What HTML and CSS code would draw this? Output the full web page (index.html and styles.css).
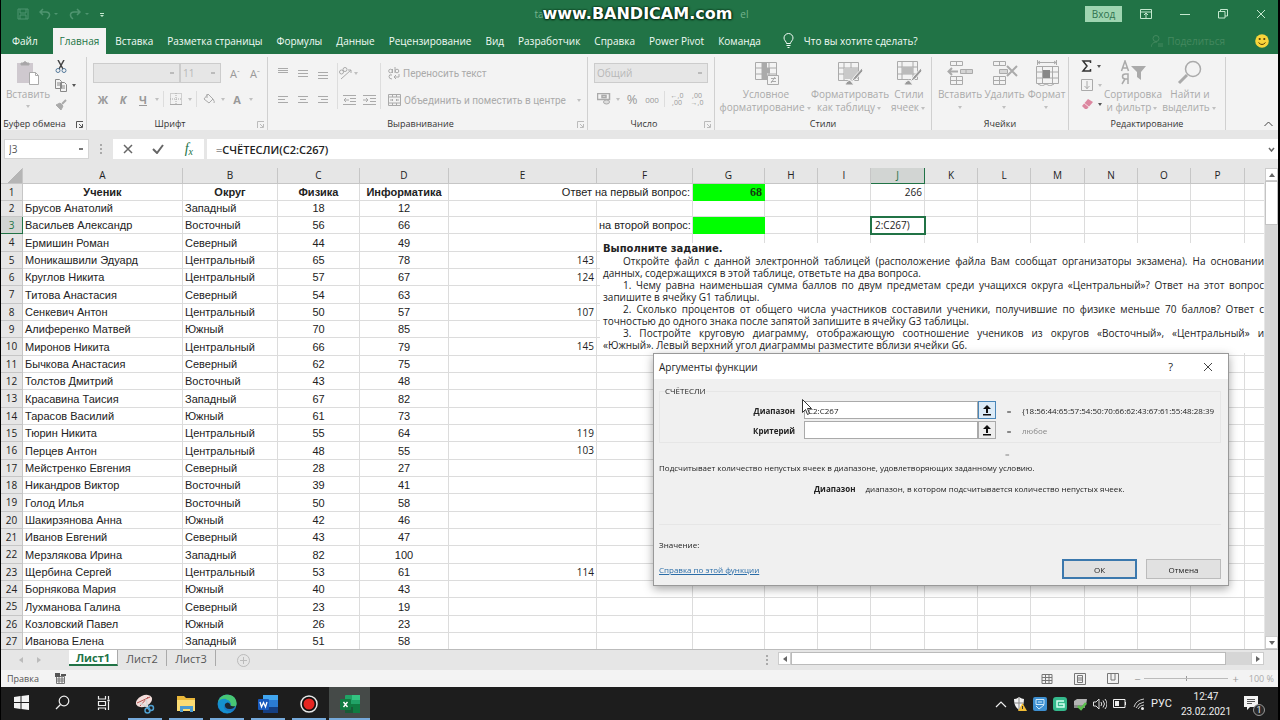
FILE: index.html
```html
<!DOCTYPE html>
<html lang="ru">
<head>
<meta charset="utf-8">
<title>Excel</title>
<link rel="stylesheet" href="styles.css">
</head>
<body>
<div class="app">
  <header class="titlebar">
    <div class="quick">
      <button aria-label="Сохранить"><svg width="12" height="12" viewBox="0 0 12 12"><path d="M1 1h10v10H1zM3 1v4h6V1M3 11V7h6v4"/></svg></button>
      <button aria-label="Отменить"><svg width="20" height="12" viewBox="0 0 20 12"><path d="M4 1L1 4l3 3M1 4h6c4 0 5 4 1 7" stroke-width="1.500"/><path d="M15 5h4l-2 2z" fill="currentColor" stroke="none"/></svg></button>
      <button aria-label="Вернуть"><svg width="20" height="12" viewBox="0 0 20 12"><path d="M8 1l3 3-3 3M11 4H5c-4 0-5 4-1 7" stroke-width="1.500"/><path d="M16 5h4l-2 2z" fill="currentColor" stroke="none"/></svg></button>
      <button class="lit" aria-label="Настройка панели"><svg width="6" height="12" viewBox="0 0 6 12"><path d="M1 5.500h4"/><path d="M1 7h4L3 9z" fill="currentColor" stroke="none"/></svg></button>
    </div>
    <div class="doc"><span>ta</span><span>el</span><div class="mark">www.BANDICAM.com</div></div>
    <div class="winbtns">
      <button class="login">Вход</button>
      <button aria-label="Параметры ленты"><svg width="12" height="10" viewBox="0 0 12 10"><path d="M.5.5h11v9H.5zM.5 3h11M6 9V4M4 6l2-2 2 2"/></svg></button>
      <button aria-label="Свернуть"><svg width="10" height="10" viewBox="0 0 10 10"><path d="M0 5.500h10"/></svg></button>
      <button aria-label="Развернуть"><svg width="10" height="10" viewBox="0 0 10 10"><path d="M.5 2.500h6.500v6.500H.5zM2.500 2.500v-2h7v6.500h-2.500"/></svg></button>
      <button aria-label="Закрыть"><svg width="10" height="10" viewBox="0 0 10 10"><path d="M1 1l8 8M9 1L1 9"/></svg></button>
    </div>
  </header>
  <nav class="tabs">
    <button>Файл</button><button class="on">Главная</button><button>Вставка</button><button>Разметка страницы</button><button>Формулы</button><button>Данные</button><button>Рецензирование</button><button>Вид</button><button>Разработчик</button><button>Справка</button><button>Power Pivot</button><button>Команда</button>
    <button class="tell"><svg width="11" height="15" viewBox="0 0 11 15"><path d="M3.500 10.500c0-2-2.500-3-2.500-5.500a4.500 4.500 0 0 1 9 0c0 2.500-2.500 3.500-2.500 5.500zM3.500 12.500h4M4.500 14.500h2"/></svg>Что вы хотите сделать?</button>
    <button class="share"><svg width="12" height="12" viewBox="0 0 12 12"><circle cx="5" cy="3.500" r="3"/><path d="M0 12c1-4 3-5 6-5M7 9h5M7 11h5"/></svg>Поделиться</button>
    <svg class="smile" width="14" height="14" viewBox="0 0 14 14"><circle cx="7" cy="7" r="6.800" fill="#f8d53a"/><circle cx="4.700" cy="5" r="1.100" fill="#553c08"/><circle cx="9.300" cy="5" r="1.100" fill="#553c08"/><path d="M3.500 8.500q3.500 4 7 0" fill="none" stroke="#553c08"/></svg>
  </nav>

  <section class="ribbon">
    <div class="group g-clip">
      <div class="body">
        <button class="big paste"><svg width="24" height="26" viewBox="0 0 24 26"><path d="M1 3h16v20H1z" fill="#cfc9cf" stroke="none"/><path d="M5 5V3h2q2-3 4 0h2v2z" fill="#a8a4a8"/><path d="M13.500 12.500h6l3 3v9h-9z" fill="#fff"/><path d="M19.500 12.500v3h3"/></svg>Вставить<i class="car"></i></button>
        <div class="stack">
          <button class="dark" aria-label="Вырезать"><svg width="12" height="13" viewBox="0 0 12 13"><path d="M3 0l5 9M9 0L4 9" stroke="#444" stroke-width="1.500"/><circle cx="3" cy="10.500" r="2" stroke="#54799b"/><circle cx="9" cy="10.500" r="2" stroke="#54799b"/></svg></button>
          <button class="dark" aria-label="Копировать"><svg width="12" height="13" viewBox="0 0 12 13"><path d="M.5.5h4l2 2v7h-6zM2 4h3M2 6h3M5.500 3.500h4l2 2v7h-6zM7 7h3M7 9h3" fill="#f3f3f3" stroke="#888"/></svg><i class="car"></i></button>
          <button aria-label="Формат по образцу"><svg width="12" height="11" viewBox="0 0 12 11"><path d="M1 6l4-2 3 3-2 4z" fill="#aaa"/><path d="M7 5l4-4" stroke-width="2"/></svg></button>
        </div>
      </div>
      <div class="cap">Буфер обмена<svg class="la" viewBox="0 0 7 7"><path d="M.5 7V.5H7M3 3l3 3M6.500 3v3.500H3"/></svg></div>
    </div>

    <div class="group g-font">
      <div class="body rows">
        <div class="line"><select class="sel font" aria-label="Шрифт"><option></option></select><select class="sel size" aria-label="Размер"><option>11</option></select><button class="w20">A<sup>ˆ</sup></button><button class="w20">A<sup>ˇ</sup></button></div>
        <div class="line"><button class="w20"><b>Ж</b></button><button class="w20"><b><em>К</em></b></button><button class="w20"><b><u>Ч</u></b></button><i class="car"></i><i class="sep"></i><button class="w20" aria-label="Границы"><svg width="12" height="12" viewBox="0 0 12 12"><path d="M.5.5h11v11H.5zM6 0v12M0 6h12" stroke-dasharray="1 1"/><path d="M0 11.500h12"/></svg></button><i class="car"></i><i class="sep"></i><button class="w20" aria-label="Заливка"><svg width="12" height="12" viewBox="0 0 12 12"><path d="M5 1l5 5-4 4-5-4zM4 5V1M10 6q2 3 1 4"/></svg></button><i class="car"></i><button class="w20"><b>A</b></button><i class="car"></i></div>
      </div>
      <div class="cap">Шрифт<svg class="la off" viewBox="0 0 7 7"><path d="M.5 7V.5H7M3 3l3 3M6.500 3v3.500H3"/></svg></div>
    </div>

    <div class="group g-align">
      <div class="body cols">
        <div class="al6">
          <button aria-label="По верху"><svg width="12" height="12" viewBox="0 0 12 12"><path d="M1 1.500h10M1 3.500h10M1 5.500h10"/></svg></button>
          <button aria-label="По середине"><svg width="12" height="12" viewBox="0 0 12 12"><path d="M1 3.500h10M1 6.500h10M1 9.500h10"/></svg></button>
          <button aria-label="По низу"><svg width="12" height="12" viewBox="0 0 12 12"><path d="M1 5.500h10M1 8.500h10M1 11.500h10"/></svg></button>
          <button aria-label="Слева"><svg width="12" height="12" viewBox="0 0 12 12"><path d="M1 2.500h10M1 5.500h7M1 8.500h10"/></svg></button>
          <button aria-label="По центру"><svg width="12" height="12" viewBox="0 0 12 12"><path d="M1 2.500h10M3 5.500h6M1 8.500h10"/></svg></button>
          <button aria-label="Справа"><svg width="12" height="12" viewBox="0 0 12 12"><path d="M1 2.500h10M4 5.500h7M1 8.500h10"/></svg></button>
        </div>
        <i class="sep tall"></i>
        <div class="al2">
          <button aria-label="Ориентация"><svg width="14" height="14" viewBox="0 0 14 14"><path d="M3 13L13 4M10 4h3v3"/><circle cx="3.500" cy="6" r="2"/><circle cx="7" cy="3.500" r="2"/></svg><i class="car"></i></button><span></span>
          <button aria-label="Уменьшить отступ"><svg width="13" height="12" viewBox="0 0 13 12"><path d="M0 1.500h13M7 4.500h6M7 7.500h6M0 10.500h13M6 6H1M3 4L1 6l2 2"/></svg></button>
          <button aria-label="Увеличить отступ"><svg width="13" height="12" viewBox="0 0 13 12"><path d="M0 1.500h13M7 4.500h6M7 7.500h6M0 10.500h13M0 6h5M3 4l2 2-2 2"/></svg></button>
        </div>
        <i class="sep tall"></i>
        <div class="wrapcol">
          <button><svg width="12" height="13" viewBox="0 0 12 13"><circle cx="2.500" cy="4" r="1.800"/><path d="M4.500 2v4M7 0v6M4 8q-3-1-3 1.500T4 12M11 7v3H6M8 8l-2 2 2 2"/><circle cx="9" cy="4" r="1.800"/></svg>Переносить текст</button>
          <button><svg width="13" height="12" viewBox="0 0 13 12"><path d="M.5.500h12v11H.5zM0 3h13M0 9h13M4.500 0v3M8.500 0v3M4.500 9v3M8.500 9v3M2 6h3M11 6H8M4 5l1 1-1 1M9 5L8 6l1 1"/></svg>Объединить и поместить в центре<i class="car"></i></button>
        </div>
      </div>
      <div class="cap">Выравнивание<svg class="la off" viewBox="0 0 7 7"><path d="M.5 7V.5H7M3 3l3 3M6.500 3v3.500H3"/></svg></div>
    </div>

    <div class="group g-num">
      <div class="body rows">
        <div class="line"><select class="sel num" aria-label="Формат числа"><option>Общий</option></select></div>
        <div class="line"><button class="w20" aria-label="Финансовый"><svg width="14" height="12" viewBox="0 0 14 12"><path d="M.5.500h12v6H.5zM5 2.500h4v2H5z" stroke-width="1.500"/><ellipse cx="9.500" cy="9" rx="3" ry="2" fill="#ddd"/></svg></button><i class="car"></i><button class="w20 pct">%</button><button class="w20 tiny">000</button><i class="sep"></i><button class="w20 dec">←,0<br>,00</button><button class="w20 dec">,00<br>→,0</button></div>
      </div>
      <div class="cap">Число<svg class="la off" viewBox="0 0 7 7"><path d="M.5 7V.5H7M3 3l3 3M6.500 3v3.500H3"/></svg></div>
    </div>

    <div class="group g-style">
      <div class="body bigs">
        <button class="big c1"><svg width="26" height="26" viewBox="0 0 26 26"><path d="M2.500 2.500h21v17h-21zM2 8h22M2 14h22M9 2v18M16 2v18"/><path d="M9 3h5v5h3v5h-3v6H9z" fill="#aaa" stroke="none"/><path d="M14.500 15.500h11v9h-11zM18 18.500h5M18 21.500h5M22 17l-4 6" fill="#f3f3f3"/></svg><span>Условное<br>форматирование<i class="car"></i></span></button>
        <button class="big c2"><svg width="26" height="26" viewBox="0 0 26 26"><path d="M1.500 2.500h20v18h-20zM1 8h21M1 14h21M7 2v19M14 2v19"/><path d="M7 8h14v11H7z" fill="#c9c9c9" stroke="none"/><path d="M25 8l-8 9-3 5 5-3 7-8zM8 25q1-4 5-5l4 5z" fill="#999" stroke="#f3f3f3"/></svg><span>Форматировать<br>как таблицу<i class="car"></i></span></button>
        <button class="big c3"><svg width="26" height="26" viewBox="0 0 26 26"><path d="M1.500 1.500h20v18h-20zM1 7h21M1 14h21M6 1v19M17 1v19"/><path d="M6 7h11v7H6z" fill="#bbb" stroke="none"/><path d="M25 8l-8 9-3 5 5-3 7-8zM8 25q1-4 5-5l4 5z" fill="#999" stroke="#f3f3f3"/></svg><span>Стили<br>ячеек<i class="car"></i></span></button>
      </div>
      <div class="cap">Стили</div>
    </div>

    <div class="group g-cells">
      <div class="body bigs">
        <button class="big d1"><svg width="26" height="26" viewBox="0 0 26 26"><path d="M3.500 1.500h12v4h-12zM9.500 1v5M3.500 16.500h12v8h-12zM3 20.500h13M9.500 16v9"/><path d="M13.500 9.500h12v4h-12zM19 9v5" fill="#d5d5d5"/><path d="M11 11.500H2M5 8l-3.500 3.500L5 15" stroke-width="2"/></svg><span>Вставить<i class="car"></i></span></button>
        <button class="big d2"><svg width="26" height="26" viewBox="0 0 26 26"><path d="M1.500 1.500h12v4h-12zM7.500 1v5M1.500 16.500h12v8h-12zM1 20.500h13M7.500 16v9"/><path d="M7.500 9.500h8v4h-8z" fill="#d5d5d5"/><path d="M15 6l10 10M25 6L15 16" stroke-width="2"/></svg><span>Удалить<i class="car"></i></span></button>
        <button class="big d3"><svg width="26" height="26" viewBox="0 0 26 26"><path d="M3.500 0v5M22.500 0v5M4 2.500h18M6 1L4 2.500 6 4M20 1l2 1.500L20 4M2.500 6.500h22v17h-22zM2 12h23M2 18h23M8.500 6v18M18.500 6v18M4 24l4 2 4-2 4 2 4-2"/><path d="M9 10h7v8H9z" fill="#888" stroke="none"/></svg><span>Формат<i class="car"></i></span></button>
      </div>
      <div class="cap">Ячейки</div>
    </div>

    <div class="group g-edit">
      <div class="body bigs">
        <div class="stack">
          <button class="dark" aria-label="Сумма"><svg width="11" height="12" viewBox="0 0 11 12"><path d="M9.500 3V1H2l4 5-4 5h7.500V9" stroke="#333" stroke-width="1.500"/></svg><i class="car"></i></button>
          <button aria-label="Заполнить"><svg width="12" height="12" viewBox="0 0 12 12"><path d="M.5.500h11v11H.5zM6 2v8M3.500 7L6 9.500 8.500 7"/></svg><i class="car"></i></button>
          <button class="dark" aria-label="Очистить"><svg width="12" height="12" viewBox="0 0 12 12"><path d="M1 8l6-7 5 3-6 7H4z" fill="#dc87a0" stroke="none"/><path d="M3 5l5 4" stroke="#f7dce4"/></svg><i class="car"></i></button>
        </div>
        <button class="big e1"><svg width="26" height="26" viewBox="0 0 26 26"><path d="M11 6h15l-5 6v8l-4-3v-5z" fill="#aaa" stroke="none"/><path d="M1.500 11l3.500-10 3.500 10M3 8h4M8 24v-10H5.500q-3 0-3 2.500T5.500 19H8M5 19l-3 5" stroke-width="1.500"/></svg><span>Сортировка<br>и фильтр<i class="car"></i></span></button>
        <button class="big e2"><svg width="26" height="26" viewBox="0 0 26 26"><circle cx="16" cy="9" r="7.500" stroke-width="1.500"/><path d="M10 15l-8 8" stroke-width="3"/></svg><span>Найти и<br>выделить<i class="car"></i></span></button>
      </div>
      <div class="cap">Редактирование</div>
    </div>
    <button class="fold" aria-label="Свернуть ленту"><svg width="9" height="6" viewBox="0 0 9 6"><path d="M.5 5l4-4 4 4" stroke="#444"/></svg></button>
  </section>

  <section class="fbar">
    <select class="name" aria-label="Имя ячейки"><option>J3</option></select>
    <i class="grip"></i>
    <div class="fbtns">
      <button aria-label="Отмена"><svg width="10" height="10" viewBox="0 0 10 10"><path d="M1 1l8 8M9 1L1 9" stroke="#666" stroke-width="1.500"/></svg></button>
      <button aria-label="Ввод"><svg width="12" height="10" viewBox="0 0 12 10"><path d="M1 5l4 4 6-8" stroke="#666" stroke-width="2"/></svg></button>
      <button class="fx">f<small>x</small></button>
    </div>
    <div class="fin"><span><i>=</i>СЧЁТЕСЛИ(C2:C267)</span><svg width="7" height="5" viewBox="0 0 7 5"><path d="M1 1l2.500 3L6 1" stroke="#666" stroke-width="1.500" fill="none"/></svg></div>
  </section>

  <main class="sheet">
    <div class="grid">
      <table class="cells">
        <colgroup><col class="k0"><col class="kA"><col class="kB"><col class="kC"><col class="kD"><col class="kE"><col class="kF"><col class="kG"><col class="kn"><col class="kn"><col class="kw"><col class="kn"><col class="kn"><col class="kw"><col class="kn"><col class="kn"><col class="kw"><col class="kn"></colgroup>
        <thead><tr><th class="corner"></th><th>A</th><th>B</th><th>C</th><th>D</th><th>E</th><th>F</th><th>G</th><th>H</th><th>I</th><th class="cur">J</th><th>K</th><th>L</th><th>M</th><th>N</th><th>O</th><th>P</th><th></th></tr></thead>
        <tbody id="rows"></tbody>
      </table>
      <div class="task">
        <b>Выполните задание.</b>
        <p class="j ind">Откройте файл с данной электронной таблицей (расположение файла Вам сообщат организаторы экзамена). На основании</p>
        <p>данных, содержащихся в этой таблице, ответьте на два вопроса.</p>
        <p class="j ind">1. Чему равна наименьшая сумма баллов по двум предметам среди учащихся округа «Центральный»? Ответ на этот вопрос</p>
        <p>запишите в ячейку G1 таблицы.</p>
        <p class="j ind">2. Сколько процентов от общего числа участников составили ученики, получившие по физике меньше 70 баллов? Ответ с</p>
        <p>точностью до одного знака после запятой запишите в ячейку G3 таблицы.</p>
        <p class="j ind">3. Постройте круговую диаграмму, отображающую соотношение учеников из округов «Восточный», «Центральный» и</p>
        <p>«Южный». Левый верхний угол диаграммы разместите вблизи ячейки G6.</p>
      </div>
    </div>
    <div class="vbar"><button aria-label="Вверх"><i class="tri up"></i></button><div class="vthumb"></div><div class="vtrack"></div><button aria-label="Вниз"><i class="tri down"></i></button></div>
  </main>

  <div class="sheets">
    <div class="arrows"><i class="tri left"></i><i class="tri right"></i></div>
    <button class="on">Лист1</button><button>Лист2</button><button>Лист3</button>
    <button class="add" aria-label="Новый лист"><svg width="13" height="13" viewBox="0 0 13 13"><circle cx="6.500" cy="6.500" r="6"/><path d="M6.500 3v7M3 6.500h7"/></svg></button>
    <div class="hbar"><i class="grip"></i><button aria-label="Влево"><i class="tri left"></i></button><div class="hthumb"></div><div class="htrack"></div><button aria-label="Вправо"><i class="tri right"></i></button></div>
  </div>

  <div class="status">
    <span>Правка</span>
    <svg width="11" height="11" viewBox="0 0 11 11"><path d="M1.500 3.500h8v7h-8zM4 3v8M7 3v8M1 6h9M1 8h9"/><path d="M0 0h5v4H0zM6 1h5v2H6z" fill="#555" stroke="none"/></svg>
    <div class="views">
      <svg width="12" height="12" viewBox="0 0 12 12"><path d="M1 1.500h10v9H1zM4.500 1v10M8 1v10M1 4.500h10M1 7.500h10"/></svg>
      <svg width="12" height="12" viewBox="0 0 12 12"><path d="M.5.500h11v11H.5zM3.500 2.500h5v7h-5zM4 5h4M4 7h4"/></svg>
      <svg width="12" height="12" viewBox="0 0 12 12"><path d="M.5.500h11v10H.5zM4 1v6h4V1"/></svg>
    </div>
    <div class="zoom"><span>−</span><i class="rail"></i><span>+</span></div>
    <span class="pc">100 %</span>
  </div>

  <footer class="taskbar">
    <button aria-label="Пуск"><svg width="15" height="15" viewBox="0 0 15 15"><path d="M0 2l6.500-1v6H0zM7.500 1L15 0v7H7.500zM0 8h6.500v6L0 13zM7.500 8H15v7l-7.500-1z" fill="#f2f2f2"/></svg></button>
    <button aria-label="Поиск"><svg width="15" height="15" viewBox="0 0 15 15"><circle cx="9" cy="6" r="4.800" fill="none" stroke="#eee" stroke-width="1.200"/><path d="M5.500 9.500L1 14" stroke="#eee" stroke-width="1.200"/></svg></button>
    <button aria-label="Представление задач"><svg width="14" height="14" viewBox="0 0 14 14"><path d="M1.500 0v3h7V0M1.500 5.500h7v4h-7zM1.500 14v-2h7v2M11.500 0v3M11.500 6v8" fill="none" stroke="#eee" stroke-width="1.200"/><circle cx="11.500" cy="4.500" r="1.200" fill="#eee"/></svg></button>
    <button class="run" aria-label="Ножницы"><svg width="20" height="20" viewBox="0 0 20 20"><ellipse cx="9" cy="7" rx="8.500" ry="5.500" fill="#f3dedb" transform="rotate(-25 9 7)"/><path d="M2 9l13-6M5 12l8-9" stroke="#b85450"/><path d="M5 9l9 5M11 5l2 10" stroke="#d8d8d8" stroke-width="1.500"/><circle cx="16" cy="14" r="2.500" fill="none" stroke="#4f9fcf" stroke-width="1.500"/><circle cx="12.500" cy="16.500" r="2.500" fill="none" stroke="#4f9fcf" stroke-width="1.500"/></svg></button>
    <button class="run" aria-label="Проводник"><svg width="20" height="18" viewBox="0 0 20 18"><path d="M1 1h7l2 2h9v13H1z" fill="#e9b73a"/><path d="M1 5h18v11H1z" fill="#fbdc74"/><path d="M4 17v-6h13v6h-3v-3H7v3z" fill="#4b9bd0"/></svg></button>
    <button class="run" aria-label="Edge"><svg width="20" height="20" viewBox="0 0 20 20"><circle cx="10" cy="10" r="9.500" fill="#1a79c4"/><path d="M1 8C3 1 9 0 13 1c5 1 8 7 6 11q-2 2-6 1c2-3 0-7-4-7-3 0-6 1-8 2z" fill="#48c774"/><path d="M1 8c4-6 12-3 12 2-3-3-7 0-6 4 1 3 5 4 9 3-6 5-16 1-15-9z" fill="#1591cf"/><path d="M8 10q3-3 5 0 0 3 5 2-1 3-5 3-6 0-5-5z" fill="#1d2732"/></svg></button>
    <button class="run" aria-label="Word"><svg width="20" height="18" viewBox="0 0 20 18"><rect x="5" y="0" width="15" height="18" rx="1" fill="#2b7cd3"/><path d="M5 0h15v5H5z" fill="#41a5ee"/><path d="M5 12h15v6H5z" fill="#153f82"/><rect y="4" width="11" height="11" rx="1" fill="#185abd"/><path d="M2 7l1.500 5L5.500 7.500 7.500 12 9 7" fill="none" stroke="#fff" stroke-width="1.300"/></svg></button>
    <button class="run" aria-label="Запись"><svg width="18" height="18" viewBox="0 0 18 18"><circle cx="9" cy="9" r="8" fill="#111" stroke="#e8e8e8" stroke-width="1.500"/><circle cx="9" cy="9" r="5.500" fill="#e52521"/></svg></button>
    <button class="run act" aria-label="Excel"><svg width="20" height="18" viewBox="0 0 20 18"><rect x="5" y="0" width="15" height="18" rx="1" fill="#21a366"/><path d="M12 0h8v5h-8z" fill="#33c481"/><path d="M5 9h15v9H5z" fill="#107c41"/><path d="M5 12h8v6H5z" fill="#185c37"/><rect y="4" width="11" height="11" rx="1" fill="#107c41"/><path d="M3.500 7l4 5M7.500 7l-4 5" stroke="#fff" stroke-width="1.400"/></svg></button>
    <div class="tray">
      <svg width="12" height="8" viewBox="0 0 12 8"><path d="M1 7l5-5 5 5" fill="none" stroke="#eee" stroke-width="1.200"/></svg>
      <svg width="14" height="14" viewBox="0 0 14 14"><path d="M1 2q3 0 5-2 3 2 5 2 0 8-5 11Q1 10 1 2z" fill="#f2f2f2"/><path d="M6 0v12M1 6h10" stroke="#888"/><path d="M9.500 6l4.500 8H5z" fill="#f2bc34"/><path d="M9.500 9v3" stroke="#333"/></svg>
      <svg width="14" height="14" viewBox="0 0 14 14"><rect width="14" height="14" rx="2" fill="#3d8fd1"/><path d="M3 2.500h8v5H3zM3 9l3 3 5-4M5 5h4" fill="none" stroke="#cfe9fb"/></svg>
      <svg width="14" height="14" viewBox="0 0 14 14"><rect width="14" height="14" rx="3" fill="#34b98c"/><path d="M11 4H4v6h7V7H6" fill="none" stroke="#d5fff0" stroke-width="1.500"/></svg>
      <svg width="14" height="14" viewBox="0 0 14 14"><path d="M1 4l3-2h10l-1 6H1z" fill="#b4b4b4"/><path d="M1 8h11v3H1z" fill="#8b8b8b"/><path d="M5 9l3 3 5-6" fill="none" stroke="#5bbf4d" stroke-width="2.500"/></svg>
      <svg width="14" height="12" viewBox="0 0 14 12"><path d="M.5 4h2.500L6 1v10L3 8H.5zM8 4q1.500 2 0 4M10 2.500q3 3.500 0 7M12 1q4 5 0 10" fill="none" stroke="#ddd"/></svg>
      <svg width="14" height="9" viewBox="0 0 14 9"><path d="M.5.500h11.500v8H.5zM12.500 3v3" fill="none" stroke="#eee"/><path d="M2 2h4v5H2z" fill="#eee"/></svg>
      <svg width="12" height="12" viewBox="0 0 12 12"><path d="M1 9Q3 2 11 1M3 10q2-5 8-6M5 11q2-4 6-4" fill="none" stroke="#ccc"/><circle cx="9.500" cy="10.500" r="1.500" fill="#eee"/></svg>
      <span>РУС</span>
      <div class="clock"><time>12:47</time><time>23.02.2021</time></div>
      <div class="note"><svg width="14" height="14" viewBox="0 0 14 14"><path d="M0 0h14v11H6l-3 3v-3H0z" fill="#f4f4f4"/><path d="M3 3.500h8M3 5.500h8M3 7.500h5" stroke="#555"/></svg><span class="badge">1</span></div>
    </div>
  </footer>
</div>

<div class="dialog" role="dialog" aria-labelledby="dt">
  <div class="dhead"><span id="dt">Аргументы функции</span><button>?</button><button aria-label="Закрыть"><svg width="10" height="10" viewBox="0 0 10 10"><path d="M1 1l8 8M9 1L1 9" stroke="#444"/></svg></button></div>
  <div class="dbody">
    <fieldset>
      <legend>СЧЁТЕСЛИ</legend>
      <div class="arg"><label for="a1">Диапазон</label><input id="a1" value="C2:C267"><button class="focus" aria-label="Выбрать диапазон"><svg width="10" height="11" viewBox="0 0 10 11"><path d="M5 0l4 4H6v4H4V4H1zM1 9h8v1.500H1z" fill="#111"/></svg></button><span>=</span><output>{18:56:44:65:57:54:50:70:66:62:43:67:61:55:48:28:39</output></div>
      <div class="arg"><label for="a2">Критерий</label><input id="a2"><button aria-label="Выбрать критерий"><svg width="10" height="11" viewBox="0 0 10 11"><path d="M5 0l4 4H6v4H4V4H1zM1 9h8v1.500H1z" fill="#111"/></svg></button><span>=</span><output class="any">любое</output></div>
    </fieldset>
    <div class="res">=</div>
    <p class="desc">Подсчитывает количество непустых ячеек в диапазоне, удовлетворяющих заданному условию.</p>
    <div class="hint"><b>Диапазон</b><span>диапазон, в котором подсчитывается количество непустых ячеек.</span></div>
    <div class="val">Значение:</div>
    <div class="foot"><a href="#">Справка по этой функции</a><button class="ok">ОК</button><button>Отмена</button></div>
  </div>
  <svg class="pointer" width="10" height="16" viewBox="0 0 10 16"><path d="M.5.500v13l3-3 2 5 2-1-2-5h4z" fill="#fff" stroke="#333"/></svg>
</div>
<script src="app.js"></script>
</body>
</html>
```
FILE: app.js
```js
const data = [
  ['Брусов Анатолий', 'Западный', 18, 12],
  ['Васильев Александр', 'Восточный', 56, 66],
  ['Ермишин Роман', 'Северный', 44, 49],
  ['Моникашвили Эдуард', 'Центральный', 65, 78, 143],
  ['Круглов Никита', 'Центральный', 57, 67, 124],
  ['Титова Анастасия', 'Северный', 54, 63],
  ['Сенкевич Антон', 'Центральный', 50, 57, 107],
  ['Алиференко Матвей', 'Южный', 70, 85],
  ['Миронов Никита', 'Центральный', 66, 79, 145],
  ['Бычкова Анастасия', 'Северный', 62, 75],
  ['Толстов Дмитрий', 'Восточный', 43, 48],
  ['Красавина Таисия', 'Западный', 67, 82],
  ['Тарасов Василий', 'Южный', 61, 73],
  ['Тюрин Никита', 'Центральный', 55, 64, 119],
  ['Перцев Антон', 'Центральный', 48, 55, 103],
  ['Мейстренко Евгения', 'Северный', 28, 27],
  ['Никандров Виктор', 'Восточный', 39, 41],
  ['Голод Илья', 'Восточный', 50, 58],
  ['Шакирзянова Анна', 'Южный', 42, 46],
  ['Иванов Евгений', 'Северный', 43, 47],
  ['Мерзлякова Ирина', 'Западный', 82, 100],
  ['Щербина Сергей', 'Центральный', 53, 61, 114],
  ['Борнякова Мария', 'Южный', 40, 43],
  ['Лухманова Галина', 'Северный', 23, 19],
  ['Козловский Павел', 'Южный', 26, 23],
  ['Иванова Елена', 'Западный', 51, 58]
];

const blank = n => '<td></td>'.repeat(n);
let html = '<tr><th>1</th><td class="h">Ученик</td><td class="h">Округ</td><td class="h">Физика</td>' +
  '<td class="h">Информатика</td><td class="q" colspan="2">Ответ на первый вопрос:</td><td class="green">68</td>' +
  blank(2) + '<td class="n">266</td>' + blank(7) + '</tr>';

data.forEach((r, i) => {
  const row = i + 2;
  const tail = row === 3
    ? '<td class="q">на второй вопрос:</td><td class="green"></td>' + blank(2) + '<td class="edit">2:C267)</td>' + blank(7)
    : blank(12);
  html += `<tr><th${row === 3 ? ' class="cur"' : ''}>${row}</th><td>${r[0]}</td><td>${r[1]}</td>` +
    `<td class="c">${r[2]}</td><td class="c">${r[3]}</td><td class="n">${r[4] || ''}</td>${tail}</tr>`;
});
document.getElementById('rows').innerHTML = html;
```
FILE: styles.css
```css
* { box-sizing: border-box; }
body { margin: 0; background: #000; font-family: "Open Sans", "Noto Sans", sans-serif; font-size: 10px; color: #333; overflow: hidden; }
button { font: inherit; color: inherit; background: none; border: 0; padding: 0; margin: 0; display: flex; align-items: center; justify-content: center; white-space: nowrap; }
select, input { font: inherit; color: inherit; }
svg { flex: none; display: block; }
p { margin: 0; }
.app { height: 100vh; min-height: 560px; display: flex; flex-direction: column; margin: 0 2px 0 1px; background: #e6e6e6; }

.titlebar { flex: none; height: 27px; background: #217346; color: #c5e8cf; display: grid; grid-template-columns: 1fr auto 1fr; align-items: center; padding: 0 12px 0 16px; }
.titlebar svg, .tabs svg { fill: none; stroke: currentColor; }
.quick { display: flex; align-items: center; gap: 10px; color: #4f9570; }
.quick .lit { color: #c5e8cf; }
.doc { position: relative; width: 214px; display: flex; justify-content: space-between; color: #75b38e; }
.mark { position: absolute; left: 8px; top: -3px; font: bold 16px/20px "DejaVu Sans", sans-serif; color: #fff; text-shadow: 0 1px 2px #062b14, 1px 0 2px #062b14, -1px 0 2px #062b14; }
.winbtns { display: flex; align-items: center; justify-content: flex-end; gap: 28px; }
.login { background: #9fd5b1; color: #2f7350; width: 37px; height: 16px; margin-right: -10px; }

.tabs { flex: none; height: 27px; background: #217346; color: #f2fbf5; display: flex; align-items: stretch; padding: 0 5px 0 4px; }
.tabs button { padding: 0 7px; }
.tabs .on { background: #f3f3f3; color: #217346; margin: 1px 2px 0 8px; }
.tabs .tell { gap: 10px; margin-left: 8px; }
.tabs .share { margin-left: auto; gap: 4px; color: #44895f; padding: 0; }
.tabs .smile { stroke: none; align-self: center; margin: 0 4px 0 30px; }

.ribbon { flex: none; height: 76px; background: #f3f3f3; display: flex; color: #aaa; position: relative; overflow: hidden; }
.ribbon svg { fill: none; stroke: #aaa; }
.group { border-right: 1px solid #d0d0d0; margin: 3px 0 0; display: flex; flex-direction: column; min-width: 0; }
.body { flex: 1; display: flex; min-height: 0; }
.cap { height: 16px; line-height: 16px; text-align: center; color: #333; font-size: 9px; position: relative; margin-bottom: -2px; }
.la { position: absolute; right: 3px; top: 5px; width: 7px; height: 7px; }
.ribbon .la { stroke: #555; }
.ribbon .la.off { stroke: #bbb; }
.g-clip { flex: 0 0 86px; }
.g-clip .cap { padding-right: 18px; }
.g-font { flex: 0 0 181px; }
.g-align { flex: 0 0 320px; }
.g-align .cap { padding-right: 14px; }
.g-num { flex: 0 0 127px; }
.g-num .cap, .g-font .cap { padding-right: 14px; }
.g-style { flex: 0 0 217px; }
.g-cells { flex: 0 0 137px; }
.g-edit { flex: 0 0 157px; }
.car { display: inline-block; width: 0; height: 0; border: 2px solid transparent; border-top: 3px solid #c0c0c0; border-bottom: 0; margin: 0 2px; vertical-align: middle; flex: none; }
.dark .car { border-top-color: #555; }
.big { flex-direction: column; justify-content: flex-start; line-height: 13px; }
.big svg { margin: 3px 0 2px; }
.paste { width: 54px; }
.paste .car { margin-top: 4px; }
.stack { display: flex; flex-direction: column; gap: 5px; width: 22px; padding-top: 2px; }
.stack button { height: 14px; justify-content: flex-start; gap: 3px; }
.rows { flex-direction: column; gap: 6px; padding: 6px 0 0 6px; }
.line { display: flex; align-items: center; height: 20px; }
.line button { height: 20px; color: #999; font-size: 11px; }
.line sup { font-size: 8px; line-height: 8px; }
.w20 { width: 20px; flex: none; }
.sep { width: 1px; height: 16px; background: #ddd; margin: 0 2px; flex: none; }
.sep.tall { height: 46px; margin: 6px 0 0; }
.sel { appearance: none; height: 20px; border: 1px solid #ccc; border-radius: 0; color: #b8b8b8; padding: 0 2px; opacity: 1;
  background: #e6e6e6 linear-gradient(#bbb, #bbb) no-repeat right 5px center / 4px 2px; }
.font { width: 87px; }
.size { width: 41px; margin-right: 4px; }
.num { width: 114px; }
.line .pct { font-size: 13px; }
.line .tiny { font-size: 8px; }
.line .dec { font-size: 7px; line-height: 7px; }
.cols { padding-left: 5px; }
.al6 { flex: none; display: grid; grid-template-columns: repeat(3, 20px); grid-template-rows: 20px 20px; row-gap: 7px; padding-top: 6px; width: 64px; }
.al2 { flex: none; display: grid; grid-template-columns: 20px 20px; grid-template-rows: 20px 20px; row-gap: 7px; padding: 6px 1px 0; }
.wrapcol { display: flex; flex-direction: column; gap: 7px; padding: 6px 0 0 7px; align-items: flex-start; font-family: Roboto, sans-serif; }
.wrapcol button { height: 20px; gap: 3px; }
.wrapcol .car { margin-left: 8px; }
.bigs { justify-content: center; }
.g-style .bigs, .g-cells .bigs, .g-edit .bigs { padding-left: 4px; }
.c1 { width: 88px; }
.c2 { width: 80px; }
.c3 { width: 38px; }
.g-cells span { display: flex; flex-direction: column; align-items: center; gap: 5px; }
.d1 { width: 45px; }
.d2 { width: 44px; }
.d3 { width: 40px; }
.e1 { width: 60px; }
.e2 { width: 54px; }
.fold { position: absolute; right: 5px; bottom: 3px; }

.fbar { flex: none; display: flex; height: 20px; margin: 9px 0; padding-left: 3px; }
.name { appearance: none; width: 85px; border: 1px solid #d4d4d4; border-radius: 0; padding: 0 4px; color: #555; background: #fff linear-gradient(#777, #777) no-repeat right 5px center / 4px 2px; }
.grip { width: 2px; border-left: 2px dotted #aaa; height: 10px; margin: 5px 11px 0; }
.fbtns { width: 91px; background: #fff; display: flex; }
.fbtns button { flex: 1; }
.fbtns svg { fill: none; }
.fx { font: italic 14px "Liberation Serif", serif; color: #217346; }
.fx small { font-size: 10px; padding-top: 4px; }
.fin { flex: 1; margin-left: 3px; background: #fff; display: flex; align-items: center; justify-content: space-between; padding: 0 3px 0 9px; font-size: 11px; font-weight: 600; color: #222; }
.fin i { font-style: normal; color: #999; }

.sheet { flex: 1; min-height: 0; display: flex; }
.grid { flex: 1; min-width: 0; position: relative; overflow: hidden; background: #fff; }
.cells { table-layout: fixed; border-collapse: separate; border-spacing: 0; width: 1297px; font: 11px/16px "Liberation Sans", sans-serif; color: #222; }
.k0 { width: 22px; } .kA { width: 160px; } .kB { width: 95px; } .kC { width: 82px; } .kD { width: 89px; }
.kE { width: 148px; } .kF { width: 96px; } .kG { width: 72px; } .kn { width: 53px; } .kw { width: 54px; }
.cells td, .cells th { padding: 0 2px; border-right: 1px solid #dcdcdc; border-bottom: 1px solid #dcdcdc; white-space: nowrap; overflow: hidden; height: 17px; }
.cells th { font: 10px/15px "Open Sans", sans-serif; background: #e6e6e6; border-color: #c6c6c6; padding: 0; }
.cells thead th { height: 16px; }
.cells .corner { background: linear-gradient(135deg, #e6e6e6 60%, #b5b5b5 60%); }
.cells tbody tr:nth-child(3n+4) > * { height: 18px; }
.cells tbody tr:nth-child(2) > * { height: 16px; line-height: 15px; }
.cells .cur { background: #d2d5d3; color: #217346; border-color: #217346; }
.cells .h { font-weight: bold; text-align: center; }
.cells .c { text-align: center; }
.cells .n { text-align: right; font: 10px/15px "Open Sans", sans-serif; }
.cells .q { text-align: right; }
.cells .green { background: #0f0; border-color: #0f0; text-align: right; font: bold 12px/15px "Liberation Serif", serif; color: #143a10; }
.cells .edit { font: 10px/15px "Open Sans", sans-serif; outline: 2px solid #217346; outline-offset: -1px; border-color: transparent; padding-left: 4px; }
.task { position: absolute; left: 599px; right: 0; top: 75px; height: 110px; background: #fff; padding-left: 3px; font-size: 10px; line-height: 12px; color: #222; white-space: nowrap; }
.task b { display: block; font-family: "DejaVu Sans", sans-serif; }
.task .ind { padding-left: 20px; }
.task .j { text-align-last: justify; }
.vbar { flex: none; width: 13px; background: #d6d6d6; display: flex; flex-direction: column; margin-left: 1px; }
.vbar button { height: 13px; background: #fff; border: 1px solid #ccc; }
.vthumb { height: 44px; background: #fff; border: 1px solid #c4c4c4; }
.vtrack { flex: 1; }
.tri { width: 0; height: 0; border: 3px solid transparent; }
.up { border-bottom: 4px solid #666; border-top: 0; }
.down { border-top: 4px solid #666; border-bottom: 0; }
.left { border-right: 4px solid #666; border-left: 0; }
.right { border-left: 4px solid #666; border-right: 0; }

.sheets { flex: none; height: 21px; border-top: 1px solid #bbb; display: flex; align-items: flex-start; font-size: 11px; color: #555; }
.arrows { width: 68px; display: flex; gap: 14px; padding: 7px 0 0 18px; }
.arrows .left { border-right-color: #bbb; }
.arrows .right { border-left-color: #bbb; }
.sheets > button { width: 49px; height: 16px; border-right: 1px solid #aaa; }
.sheets > .on { background: #fff; color: #217346; font-weight: bold; border-bottom: 2px solid #217346; }
.sheets > .add { border: 0; margin: 2px 0 0 3px; color: #bbb; }
.sheets svg { fill: none; stroke: #bbb; }
.hbar { margin-left: auto; flex: 0 0 512px; display: flex; padding: 2px 14px 0 0; }
.hbar .grip { margin: 3px 10px 0 0; }
.hbar button { width: 13px; height: 13px; background: #fff; border: 1px solid #ccc; flex: none; }
.hthumb { flex: 435; height: 13px; background: #fff; border: 1px solid #bbb; }
.htrack { flex: 25; height: 13px; background: #d6d6d6; }

.status { flex: none; height: 17px; background: #f3f3f3; display: flex; align-items: center; padding: 0 4px 0 6px; font-size: 9px; color: #555; }
.status svg { fill: none; stroke: #777; }
.status > svg { margin-left: 16px; }
.views { margin-left: auto; display: flex; gap: 21px; }
.zoom { display: flex; align-items: center; gap: 4px; margin-left: 15px; color: #999; font-size: 11px; }
.rail { width: 84px; height: 5px; background: linear-gradient(#bbb, #bbb) no-repeat center / 100% 1px, linear-gradient(#999, #999) no-repeat center / 1px 5px; }
.pc { margin-left: 10px; color: #aaa; }

.taskbar { flex: none; height: 33px; background: #1d1d1d; display: flex; color: #eee; }
.taskbar > button { width: 41px; border-bottom: 2px solid transparent; }
.taskbar > button.run { background: linear-gradient(#76aadb, #76aadb) no-repeat center bottom / 34px 2px; background-origin: border-box; border: 0; }
.taskbar > button.act { background-color: #454a48; background-size: 100% 2px; }
.tray { margin-left: auto; display: flex; align-items: center; gap: 6px; padding-right: 16px; font: 11px Roboto, sans-serif; }
.clock { display: flex; flex-direction: column; align-items: center; line-height: 15px; width: 56px; font-size: 10px; }
.note { position: relative; padding: 0 4px 2px 4px; }
.badge { position: absolute; right: -3px; bottom: -4px; width: 12px; height: 12px; border-radius: 50%; background: #2a2a2a; border: 1px solid #999; font-size: 9px; line-height: 10px; text-align: center; }

.dialog { position: fixed; right: 51px; top: 353px; width: 576px; height: 233px; background: #f0f0f0; border: 1px solid #999; box-shadow: 0 3px 9px rgba(0, 0, 0, .35); font-size: 8px; color: #222; display: flex; flex-direction: column; }
.dhead { height: 25px; background: #fff; display: flex; align-items: center; padding: 0 15px 0 5px; font-size: 10px; }
.dhead span { flex: 1; }
.dhead button { font-size: 11px; margin-left: 30px; }
.dbody { flex: 1; padding: 6px 7px 6px 5px; display: flex; flex-direction: column; }
fieldset { margin: 0; border: 1px solid #e6e6e6; padding: 4px 5px 2px 8px; height: 58px; min-width: 0; }
legend { padding: 0; line-height: 12px; margin-left: -3px; }
.arg { display: flex; height: 18px; margin-bottom: 2px; align-items: center; }
.arg label { width: 127px; text-align: right; font-weight: bold; margin-right: 9px; }
.arg input { width: 174px; height: 18px; border: 1px solid #aaa; padding: 0 3px; margin: 0; }
.arg button { width: 18px; height: 18px; border: 1px solid #aaa; background: #eee; }
.arg .focus { border-color: #4a86b8; background: #dcebf7; }
.arg span { width: 26px; text-align: center; }
.arg output { flex: 1; min-width: 0; white-space: nowrap; }
.any, .res { color: #888; }
.res { padding-left: 346px; line-height: 12px; margin-top: 5px; }
.desc { line-height: 12px; margin-top: 2px; }
.hint { display: flex; gap: 10px; padding-left: 155px; line-height: 12px; margin-top: 9px; height: 42px; border-bottom: 1px solid #e6e6e6; }
.val { line-height: 12px; margin-top: auto; }
.foot { display: flex; align-items: center; margin-top: 8px; gap: 9px; }
.foot a { color: #2b6da8; flex: 1; }
.foot button { width: 75px; height: 20px; background: #e1e1e1; border: 1px solid #bbb; }
.foot .ok { border: 2px solid #3b78ad; }
.pointer { position: absolute; left: 148px; top: 45px; }
```
